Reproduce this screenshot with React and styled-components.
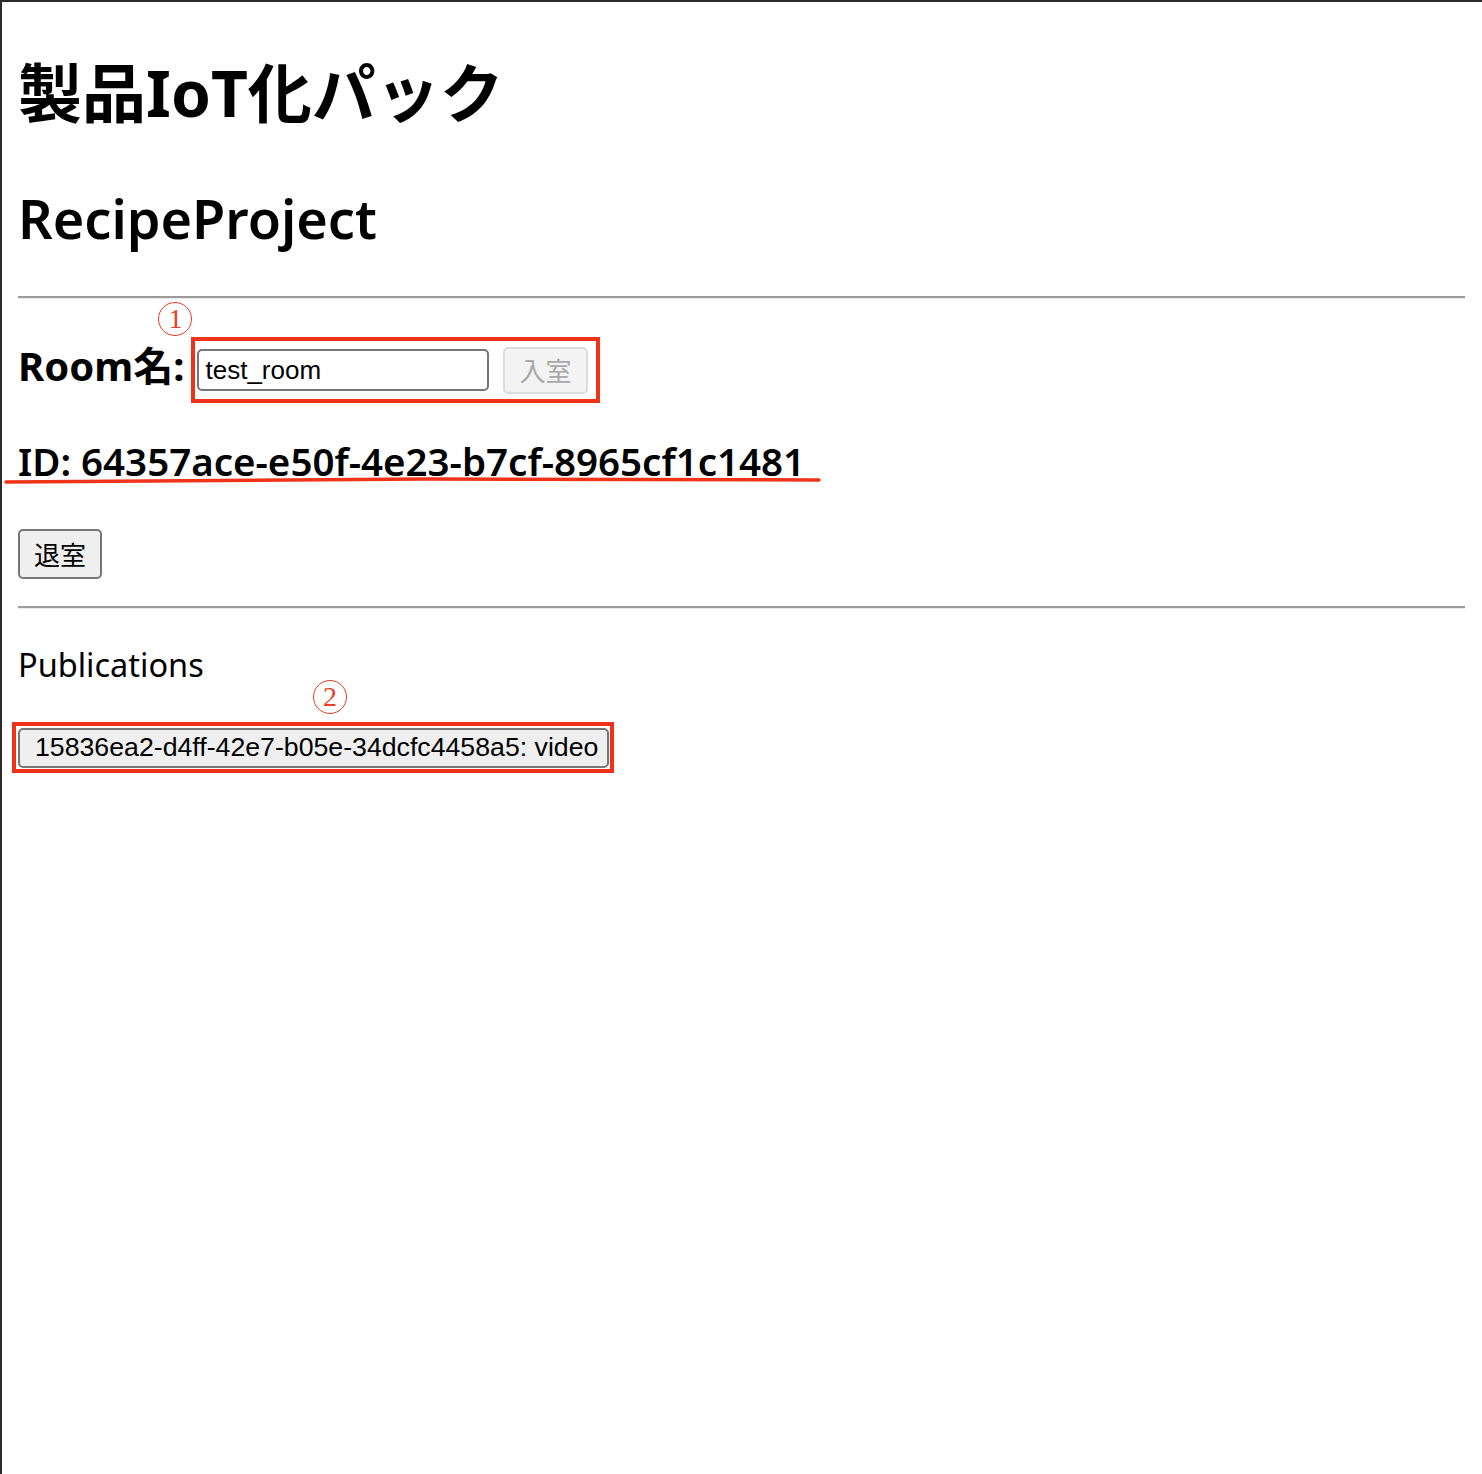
import React, { useState } from 'react'
import styled, { createGlobalStyle } from 'styled-components'

const GlobalStyle = createGlobalStyle`
  html, body {
    margin: 0;
    padding: 0;
    background: #ffffff;
  }
  body {
    font-family: "Noto Sans", "Noto Sans CJK JP", sans-serif;
    color: #000000;
  }
`

const Frame = styled.div`
  box-sizing: border-box;
  min-height: 1474px;
  border-top: 2px solid #2b2b2b;
  border-left: 2px solid #2b2b2b;
  padding: 0 17px 0 16px;
`

const Title = styled.h1`
  margin: 59px 0 0 0;
  font-size: 64px;
  line-height: 64px;
  font-weight: 700;
`

const SubTitle = styled.h2`
  margin: 66px 0 0 0;
  font-size: 54px;
  line-height: 54px;
  font-weight: 600;
`

const Rule = styled.hr`
  height: 0;
  margin: ${({ top }) => top}px 0 0;
  border: 0;
  border-top: 2px solid #9b9b9b;
  border-bottom: 1px solid #ececec;
`

const RoomRow = styled.div`
  display: flex;
  align-items: center;
  margin-top: 38px;
`

const RoomLabel = styled.h3`
  margin: 0 7px 0 0;
  padding-bottom: 8px;
  font-size: 40px;
  line-height: 40px;
  font-weight: 700;
`

const Marked = styled.div`
  position: relative;
  display: flex;
  align-items: center;
  gap: 14px;
  height: ${({ h }) => h}px;
  padding: 0 ${({ right }) => right}px 0 2px;
  margin-left: ${({ shift }) => shift || 0}px;
  border: 4px solid #f0321a;
`

const Mark = styled.span`
  position: absolute;
  left: ${({ x }) => x}px;
  top: ${({ y }) => y}px;
  display: inline-flex;
  align-items: center;
  justify-content: center;
  box-sizing: border-box;
  width: 34px;
  height: 34px;
  border: 1.5px solid #ea3d22;
  border-radius: 50%;
  color: #ea3d22;
  font-family: "Liberation Serif", serif;
  font-size: 28px;
  line-height: 1;
`

const TextInput = styled.input`
  box-sizing: border-box;
  width: 292px;
  height: 42px;
  padding: 0 6px;
  border: 2px solid #767676;
  border-radius: 5px;
  font-family: "Liberation Sans", Arial, sans-serif;
  font-size: 26px;
  color: #000;
  background: #fff;
  outline: none;
`

const Button = styled.button`
  box-sizing: border-box;
  height: ${({ h }) => h}px;
  padding: 0 ${({ padR }) => padR}px 0 ${({ padL }) => padL}px;
  border: 2px solid ${({ disabled }) => (disabled ? '#dcdcdc' : '#767676')};
  border-radius: 5px;
  background: ${({ disabled }) => (disabled ? '#f3f3f3' : '#efefef')};
  color: ${({ disabled }) => (disabled ? '#a9a9a9' : '#000')};
  font-family: ${({ latin }) =>
    latin ? '"Liberation Sans", Arial, sans-serif' : '"Noto Sans CJK JP", sans-serif'};
  font-size: ${({ latin }) => (latin ? '26.7px' : '26px')};
  line-height: 1;
  text-align: left;
  cursor: pointer;
`

const IdWrap = styled.div`
  position: relative;
  margin-top: 40px;
`

const IdText = styled.h3`
  margin: 0;
  font-size: 38.5px;
  line-height: 37px;
  font-weight: 600;
`

const Underline = styled.svg`
  position: absolute;
  left: -13px;
  top: 34px;
  overflow: visible;
`

const LeaveRow = styled.div`
  margin-top: 49px;
`

const Section = styled.p`
  margin: 40px 0 0 0;
  font-size: 32.5px;
  line-height: 32px;
  font-weight: 400;
`

const PubList = styled.div`
  display: flex;
  margin-top: 41px;
`

export default function App() {
  const [room, setRoom] = useState('test_room')

  return (
    <Frame>
      <GlobalStyle />
      <Title>製品IoT化パック</Title>
      <SubTitle>RecipeProject</SubTitle>
      <Rule top={51} />
      <RoomRow>
        <RoomLabel>Room名:</RoomLabel>
        <Marked h={58} right={8}>
          <Mark x={-37} y={-39}>1</Mark>
          <TextInput value={room} onChange={e => setRoom(e.target.value)} />
          <Button h={47} padL={14} padR={14} disabled>入室</Button>
        </Marked>
      </RoomRow>
      <IdWrap>
        <IdText>ID: 64357ace-e50f-4e23-b7cf-8965cf1c1481</IdText>
        <Underline width="815" height="8" viewBox="0 0 815 8">
          <path d="M1 5 C 200 2, 600 1, 814 3" fill="none" stroke="#f0341a" strokeWidth="3.5" strokeLinecap="round" />
        </Underline>
      </IdWrap>
      <LeaveRow>
        <Button h={50} padL={14} padR={14}>退室</Button>
      </LeaveRow>
      <Rule top={27} />
      <Section>Publications</Section>
      <PubList>
        <Marked h={43} right={1} shift={-6}>
          <Mark x={297} y={-46}>2</Mark>
          <Button h={40} padL={15} padR={9} latin>15836ea2-d4ff-42e7-b05e-34dcfc4458a5: video</Button>
        </Marked>
      </PubList>
    </Frame>
  )
}
